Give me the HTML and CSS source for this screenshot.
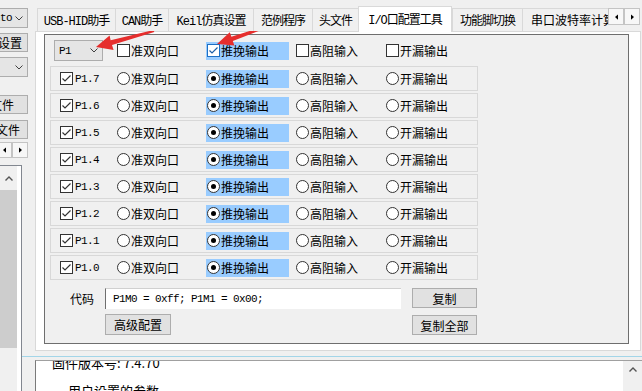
FILE: index.html
```html
<!DOCTYPE html>
<html lang="zh-CN">
<head>
    <meta charset="UTF-8">
    <title>I/O口配置工具</title>
    <link rel="stylesheet" href="styles.css">
</head>
<body>
<div class="app">
    <aside class="side">
        <div class="combo side-combo c1"><span class="mono">Auto</span><svg class="chev" viewBox="0 0 8 5"><polyline points="0.5,0.5 4,4 7.5,0.5"/></svg></div>
        <div class="btn side-btn b-set">高级设置</div>
        <div class="combo side-combo c2"><span></span><svg class="chev" viewBox="0 0 8 5"><polyline points="0.5,0.5 4,4 7.5,0.5"/></svg></div>
        <div class="btn side-btn b-open">打开文件</div>
        <div class="btn side-btn b-save">保存头文件</div>
        <div class="side-arrows">
            <span class="arr"><svg viewBox="0 0 4 7"><polygon points="4,0 0,3.5 4,7"/></svg></span>
            <span class="arr"><svg viewBox="0 0 4 7"><polygon points="0,0 4,3.5 0,7"/></svg></span>
        </div>
        <div class="listbox">
            <div class="lb-scroll">
                <div class="lb-up"><svg viewBox="0 0 8 5"><polyline points="0.5,4.5 4,1 7.5,4.5"/></svg></div>
                <div class="lb-track"></div>
            </div>
            <div class="lb-content"></div>
        </div>
    </aside>

    <main class="main">
        <div class="tabs">
            <div class="tab-list">
                <div class="tab t1">USB-HID助手</div>
                <div class="tab t2">CAN助手</div>
                <div class="tab t3">Keil仿真设置</div>
                <div class="tab t4">范例程序</div>
                <div class="tab t5">头文件</div>
                <div class="tab t6 active">I/O口配置工具</div>
                <div class="tab t7">功能脚切换</div>
                <div class="tab t8">串口波特率计算器</div>
            </div>
            <div class="tab-scroll">
                <span class="arr"><svg viewBox="0 0 4 7"><polygon points="4,0 0,3.5 4,7"/></svg></span>
                <span class="arr"><svg viewBox="0 0 4 7"><polygon points="0,0 4,3.5 0,7"/></svg></span>
            </div>
        </div>

        <div class="page">
            <div class="group">
                <div class="row head">
                    <div class="combo port"><span class="mono">P1</span><svg class="chev" viewBox="0 0 8 5"><polyline points="0.5,0.5 4,4 7.5,0.5"/></svg></div>
                    <div class="opt"><span class="cb"></span>准双向口</div>
                    <div class="opt hl"><span class="cb blue"><svg viewBox="0 0 13 13"><polyline points="2.5,6.5 5,9 10.5,3.5"/></svg></span>推挽输出</div>
                    <div class="opt"><span class="cb"></span>高阻输入</div>
                    <div class="opt"><span class="cb"></span>开漏输出</div>
                </div>

                <div class="row band">
                    <div class="opt"><span class="cb"><svg viewBox="0 0 13 13"><polyline points="2.5,6.5 5,9 10.5,3.5"/></svg></span><span class="pin">P1.7</span></div>
                    <div class="opt"><span class="rb"></span>准双向口</div>
                    <div class="opt hl"><span class="rb on"></span>推挽输出</div>
                    <div class="opt"><span class="rb"></span>高阻输入</div>
                    <div class="opt"><span class="rb"></span>开漏输出</div>
                </div>
                <div class="row band">
                    <div class="opt"><span class="cb"><svg viewBox="0 0 13 13"><polyline points="2.5,6.5 5,9 10.5,3.5"/></svg></span><span class="pin">P1.6</span></div>
                    <div class="opt"><span class="rb"></span>准双向口</div>
                    <div class="opt hl"><span class="rb on"></span>推挽输出</div>
                    <div class="opt"><span class="rb"></span>高阻输入</div>
                    <div class="opt"><span class="rb"></span>开漏输出</div>
                </div>
                <div class="row band">
                    <div class="opt"><span class="cb"><svg viewBox="0 0 13 13"><polyline points="2.5,6.5 5,9 10.5,3.5"/></svg></span><span class="pin">P1.5</span></div>
                    <div class="opt"><span class="rb"></span>准双向口</div>
                    <div class="opt hl"><span class="rb on"></span>推挽输出</div>
                    <div class="opt"><span class="rb"></span>高阻输入</div>
                    <div class="opt"><span class="rb"></span>开漏输出</div>
                </div>
                <div class="row band">
                    <div class="opt"><span class="cb"><svg viewBox="0 0 13 13"><polyline points="2.5,6.5 5,9 10.5,3.5"/></svg></span><span class="pin">P1.4</span></div>
                    <div class="opt"><span class="rb"></span>准双向口</div>
                    <div class="opt hl"><span class="rb on"></span>推挽输出</div>
                    <div class="opt"><span class="rb"></span>高阻输入</div>
                    <div class="opt"><span class="rb"></span>开漏输出</div>
                </div>
                <div class="row band">
                    <div class="opt"><span class="cb"><svg viewBox="0 0 13 13"><polyline points="2.5,6.5 5,9 10.5,3.5"/></svg></span><span class="pin">P1.3</span></div>
                    <div class="opt"><span class="rb"></span>准双向口</div>
                    <div class="opt hl"><span class="rb on"></span>推挽输出</div>
                    <div class="opt"><span class="rb"></span>高阻输入</div>
                    <div class="opt"><span class="rb"></span>开漏输出</div>
                </div>
                <div class="row band">
                    <div class="opt"><span class="cb"><svg viewBox="0 0 13 13"><polyline points="2.5,6.5 5,9 10.5,3.5"/></svg></span><span class="pin">P1.2</span></div>
                    <div class="opt"><span class="rb"></span>准双向口</div>
                    <div class="opt hl"><span class="rb on"></span>推挽输出</div>
                    <div class="opt"><span class="rb"></span>高阻输入</div>
                    <div class="opt"><span class="rb"></span>开漏输出</div>
                </div>
                <div class="row band">
                    <div class="opt"><span class="cb"><svg viewBox="0 0 13 13"><polyline points="2.5,6.5 5,9 10.5,3.5"/></svg></span><span class="pin">P1.1</span></div>
                    <div class="opt"><span class="rb"></span>准双向口</div>
                    <div class="opt hl"><span class="rb on"></span>推挽输出</div>
                    <div class="opt"><span class="rb"></span>高阻输入</div>
                    <div class="opt"><span class="rb"></span>开漏输出</div>
                </div>
                <div class="row band">
                    <div class="opt"><span class="cb"><svg viewBox="0 0 13 13"><polyline points="2.5,6.5 5,9 10.5,3.5"/></svg></span><span class="pin">P1.0</span></div>
                    <div class="opt"><span class="rb"></span>准双向口</div>
                    <div class="opt hl"><span class="rb on"></span>推挽输出</div>
                    <div class="opt"><span class="rb"></span>高阻输入</div>
                    <div class="opt"><span class="rb"></span>开漏输出</div>
                </div>

                <div class="code">
                    <div class="code-label">代码</div>
                    <div class="code-box mono">P1M0 = 0xff; P1M1 = 0x00;</div>
                    <div class="btn b-copy">复制</div>
                    <div></div>
                    <div class="btn b-adv">高级配置</div>
                    <div class="btn b-all">复制全部</div>
                </div>
            </div>
        </div>

        <div class="split"></div>

        <div class="log">
            <div class="log-text">
                <p>固件版本号: 7.4.70</p>
                <p class="indent">用户设置的参数</p>
            </div>
            <div class="log-bar"><svg viewBox="0 0 8 5"><polyline points="0.5,4.5 4,1 7.5,4.5"/></svg></div>
        </div>
    </main>
</div>

<!-- red annotation arrows drawn over the window -->
<svg class="marks" viewBox="0 0 642 391">
    <polygon points="96,47 109.6,35.4 110.6,40.3 153.7,30 154.3,32 112.0,45.1 113.6,50"/>
    <polygon points="217,44 229.8,32.2 231.4,36.7 265.7,26 266.3,28 232.8,40.9 234.4,45.4"/>
</svg>
</body>
</html>
```

FILE: styles.css
```css
body {
    margin: 0;
    width: 642px;
    height: 391px;
    overflow: hidden;
    position: relative;
    background-color: #f0f0f0;
    font-family: "Noto Sans CJK SC", sans-serif;
    font-size: 12px;
    color: #000;
}
p {
    margin: 0;
}
.mono {
    font-family: "Liberation Mono", "Noto Sans CJK SC", monospace;
    font-size: 11px;
    letter-spacing: -0.6px;
}
.app {
    display: flex;
    height: 391px;
}

/* left column, mostly cut off by the window edge */
.side {
    width: 22px;
    flex: none;
    display: flex;
    flex-direction: column;
    align-items: flex-end;
}
.combo {
    box-sizing: border-box;
    display: flex;
    align-items: center;
    justify-content: space-between;
    border: 1px solid #adadad;
    background-color: #e5e5e5;
    padding: 0 4px 0 3px;
}
.chev {
    width: 8px;
    height: 5px;
    fill: none;
    stroke: #404040;
    stroke-width: 1;
}
.side-combo {
    width: 44px;
    height: 20px;
    margin-right: -6px;
    flex: none;
}
.c1 {
    margin-top: 8px;
}
.c2 {
    margin-top: 5px;
}
.btn {
    box-sizing: border-box;
    display: flex;
    align-items: center;
    justify-content: center;
    background-color: #e1e1e1;
    border: 1px solid #adadad;
    white-space: nowrap;
    flex: none;
}
.side-btn {
    height: 19px;
    margin-right: -6px;
    overflow: hidden;
}
.b-set {
    width: 60px;
    margin-top: 5px;
}
.b-open {
    width: 76px;
    margin-top: 18px;
}
.b-save {
    width: 76px;
    margin-top: 6px;
}
.side-arrows {
    display: flex;
    margin-top: 3px;
    margin-right: -6px;
}
.arr {
    box-sizing: border-box;
    width: 16px;
    height: 17px;
    display: flex;
    align-items: center;
    justify-content: center;
    background-color: #f7f7f7;
    border: 1px solid #c4c4c4;
}
.arr svg {
    width: 3px;
    height: 6px;
    fill: #000;
}
.side-arrows .arr {
    height: 16px;
}
.listbox {
    align-self: stretch;
    flex: 1;
    margin-top: 7px;
    display: flex;
    border-top: 1px solid #828790;
    border-right: 1px solid #828790;
}
.lb-scroll {
    width: 17px;
    display: flex;
    flex-direction: column;
    background-color: #f0f0f0;
}
.lb-up {
    height: 24px;
    display: flex;
    align-items: center;
    justify-content: center;
}
.lb-up svg, .log-bar svg {
    width: 8px;
    height: 5px;
    fill: none;
    stroke: #555;
    stroke-width: 1.4;
}
.lb-track {
    height: 158px;
    background-color: #cdcdcd;
}
.lb-content {
    flex: 1;
    background-color: #fff;
}

/* tab control */
.main {
    flex: 1;
    padding-left: 13px;
    display: flex;
    flex-direction: column;
    min-width: 0;
}
.tabs {
    display: flex;
    height: 26px;
    margin-top: 6px;
    margin-bottom: -1px;
    position: relative;
    z-index: 1;
}
.tab-list {
    flex: 1;
    display: flex;
    align-items: flex-end;
    overflow: hidden;
    padding-left: 2px;
    min-width: 0;
}
.tab {
    box-sizing: border-box;
    flex: none;
    height: 23px;
    margin-bottom: 1px;
    display: flex;
    align-items: center;
    justify-content: center;
    border: 1px solid #d9d9d9;
    border-right: none;
    border-bottom: none;
    background-color: #f0f0f0;
    font-family: "Liberation Mono", "Noto Sans CJK SC", monospace;
    letter-spacing: -1px;
    white-space: nowrap;
}
.tab.active {
    height: 26px;
    margin-bottom: 0;
    padding-bottom: 2px;
    background-color: #fff;
    border-right: 1px solid #d9d9d9;
}
.t1 { width: 78px; }
.t2 { width: 53px; }
.t3 { width: 85px; }
.t4 { width: 59px; }
.t5 { width: 46px; }
.t6 { width: 94px; }
.t7 { width: 70px; }
.t8 { width: 104px; justify-content: flex-start; padding-left: 8px; letter-spacing: 0; }
.tab-scroll {
    flex: none;
    display: flex;
    margin-top: 2px;
    margin-right: 2px;
}
.page {
    box-sizing: border-box;
    height: 320px;
    margin-right: 1px;
    border: 1px solid #d9d9d9;
    background-color: #fff;
    padding: 2px 0 0 8px;
}
.group {
    box-sizing: border-box;
    width: 585px;
    height: 310px;
    border: 1px solid #6e6e6e;
    background-color: #f0f0f0;
    padding-left: 5px;
}

/* pin rows */
.row {
    display: grid;
    grid-template-columns: 57px 89px 90px 90px auto;
    align-items: center;
}
.head {
    height: 31px;
    padding-left: 4px;
    grid-template-columns: 63px 89px 90px 90px auto;
}
.port {
    width: 49px;
    height: 21px;
    padding-left: 4px;
    padding-right: 4px;
}
.band {
    box-sizing: border-box;
    width: 428px;
    height: 25px;
    margin-bottom: 2px;
    padding-left: 9px;
    border: 1px solid #d8d8d8;
}
.opt {
    display: flex;
    align-items: center;
    gap: 1px;
    height: 18px;
    white-space: nowrap;
}
.opt.hl {
    width: 83px;
    padding-left: 1px;
    box-sizing: border-box;
    background-color: #99ccff;
}
.cb, .rb {
    box-sizing: border-box;
    width: 13px;
    height: 13px;
    flex: none;
    display: flex;
    align-items: center;
    justify-content: center;
    background-color: #fff;
    border: 1px solid #333;
}
.cb svg {
    width: 13px;
    height: 13px;
    flex: none;
    fill: none;
    stroke: #333;
    stroke-width: 1.2;
}
.cb.blue {
    border-color: #1c6fc4;
}
.cb.blue svg {
    stroke: #1c5fa8;
}
.rb {
    border-radius: 50%;
}
.rb.on::after {
    content: "";
    width: 5px;
    height: 5px;
    border-radius: 50%;
    background-color: #000;
}
.pin {
    margin-left: 1px;
    font-family: "Liberation Mono", monospace;
    font-size: 11px;
    letter-spacing: -0.6px;
}

/* code output */
.code {
    display: grid;
    grid-template-columns: 55px 307px 65px;
    grid-auto-rows: 21px;
    row-gap: 5px;
    margin-top: 8px;
    align-items: center;
}
.code-label {
    padding-left: 20px;
}
.code-box {
    box-sizing: border-box;
    width: 296px;
    height: 21px;
    display: flex;
    align-items: center;
    padding-left: 7px;
    background-color: #fff;
    border-left: 1px solid #6f6f6f;
    border-top: 1px solid #d0d0d0;
}
.b-copy, .b-all {
    width: 65px;
    height: 20px;
}
.b-copy {
    align-self: start;
}
.b-all {
    align-self: end;
}
.b-adv {
    width: 66px;
    height: 21px;
}

/* log area below the tabs */
.split {
    height: 1px;
    margin: 5px 0 0 -13px;
    background-color: #a3d5e8;
}
.log {
    flex: 1;
    margin-top: 3px;
    display: flex;
    overflow: hidden;
    background-color: #fff;
    border-top: 1px solid #a0a0a0;
    border-left: 1px solid #7a7a7a;
}
.log-text {
    flex: 1;
    margin-top: -12px;
    padding-left: 16px;
    font-size: 13px;
    line-height: 28px;
}
.log-text .indent {
    padding-left: 16px;
}
.log-bar {
    width: 19px;
    display: flex;
    justify-content: center;
    padding-top: 6px;
    background-color: #f0f0f0;
}
.log-bar svg {
    align-self: flex-start;
}

.marks {
    position: absolute;
    left: 0;
    top: 0;
    width: 642px;
    height: 391px;
    pointer-events: none;
    fill: #e62e2d;
}
```
